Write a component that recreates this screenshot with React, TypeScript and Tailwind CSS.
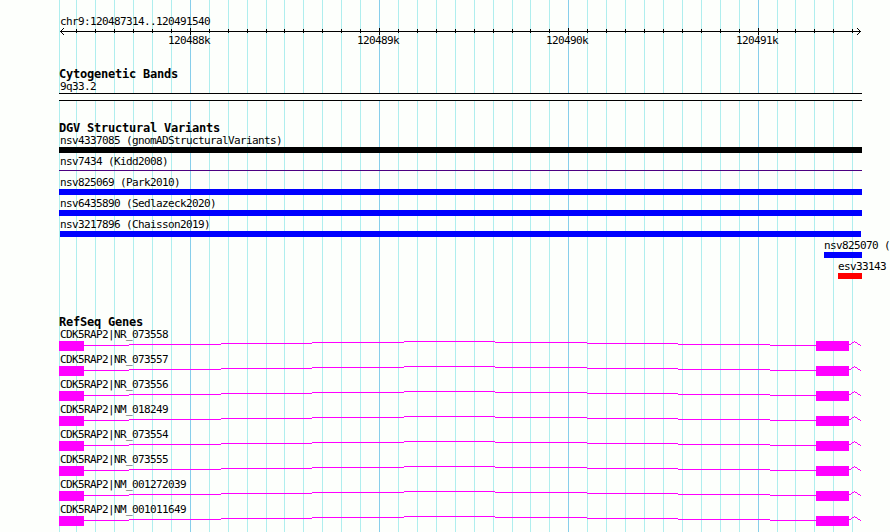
import React from 'react';

interface Variant {
  name: string;
  start: number;
  end: number;
  color: string;
  thin?: boolean;
}

const minorLines = [
  59, 76, 95, 114, 133, 152, 171, 209, 228, 247, 266, 284, 303, 322, 341, 360, 398, 417, 436, 455, 474,
  493, 512, 530, 549, 587, 606, 625, 644, 663, 682, 701, 720, 739, 777, 795, 814, 833, 852,
];

const majorLines = [
  { x: 190, label: '120488k', labelX: 168 },
  { x: 379, label: '120489k', labelX: 357 },
  { x: 568, label: '120490k', labelX: 546 },
  { x: 758, label: '120491k', labelX: 736 },
];

const variants: Variant[] = [
  { name: 'nsv4337085 (gnomADStructuralVariants)', start: 59, end: 862, color: 'bg-black' },
  { name: 'nsv7434 (Kidd2008)', start: 59, end: 862, color: 'bg-[#4b0082]', thin: true },
  { name: 'nsv825069 (Park2010)', start: 59, end: 862, color: 'bg-[#0000ff]' },
  { name: 'nsv6435890 (Sedlazeck2020)', start: 59, end: 862, color: 'bg-[#0000ff]' },
  { name: 'nsv3217896 (Chaisson2019)', start: 60, end: 861, color: 'bg-[#0000ff]' },
  { name: 'nsv825070 (', start: 824, end: 862, color: 'bg-[#0000ff]' },
  { name: 'esv33143', start: 838, end: 862, color: 'bg-[#ff0000]' },
];

const genes = [
  'CDK5RAP2|NR_073558',
  'CDK5RAP2|NR_073557',
  'CDK5RAP2|NR_073556',
  'CDK5RAP2|NM_018249',
  'CDK5RAP2|NR_073554',
  'CDK5RAP2|NR_073555',
  'CDK5RAP2|NM_001272039',
  'CDK5RAP2|NM_001011649',
];

// [x1, x2, y] pieces of the peaked intron connectors
const intron = [
  [84, 129, 4],
  [129, 221, 3],
  [221, 312, 2],
  [312, 404, 1],
  [404, 495, 0],
  [495, 587, 1],
  [587, 678, 2],
  [678, 770, 3],
  [770, 816, 4],
  [849, 851, 3],
  [851, 852, 2],
  [852, 854, 1],
  [854, 855, 0],
  [855, 857, 1],
  [857, 858, 2],
  [858, 860, 3],
  [860, 861, 4],
];

function GridLines() {
  return (
    <svg className="absolute inset-0" width="890" height="532" shapeRendering="crispEdges">
      {minorLines.map((x) => (
        <rect key={x} x={x} y={0} width={1} height={532} fill="#afeeee" />
      ))}
      {majorLines.map(({ x }) => (
        <rect key={x} x={x} y={0} width={1} height={532} fill="#87ceeb" />
      ))}
    </svg>
  );
}

function Ruler() {
  return (
    <svg className="block" width="890" height="19" shapeRendering="crispEdges">
      <rect x={60} y={3} width={801} height={1} />
      {minorLines.slice(1).map((x) => (
        <rect key={x} x={x} y={1} width={1} height={4} />
      ))}
      {majorLines.map(({ x, label, labelX }) => (
        <g key={x}>
          <rect x={x} y={0} width={1} height={7} />
          <text x={labelX} y={16}>
            {label}
          </text>
        </g>
      ))}
      <path d="M61 2h1v1h-1zM62 1h1v1h-1zM63 0h1v1h-1zM61 4h1v1h-1zM62 5h1v1h-1zM63 6h1v1h-1z" />
      <path d="M859 2h1v1h-1zM858 1h1v1h-1zM857 0h1v1h-1zM859 4h1v1h-1zM858 5h1v1h-1zM857 6h1v1h-1z" />
    </svg>
  );
}

function TrackTitle({ children }: { children: React.ReactNode }) {
  return (
    <h2 className="h-3 pl-[59px] text-[12px] leading-[12px] font-bold tracking-[-0.224px]">{children}</h2>
  );
}

function VariantRow({ variant }: { variant: Variant }) {
  const { name, start, end, color, thin } = variant;
  return (
    <div>
      <div className="h-[13px]" style={{ paddingLeft: Math.max(start, 60) }}>
        {name}
      </div>
      <div className="h-1.5" style={{ paddingLeft: start }}>
        <div
          className={`${color} ${thin ? 'relative top-0.5 h-px' : 'h-1.5'}`}
          style={{ width: end - start }}
        ></div>
      </div>
    </div>
  );
}

function GeneRow({ name }: { name: string }) {
  return (
    <div>
      <div className="h-[13px] pl-[60px]">{name}</div>
      <svg className="block" width="890" height="10" fill="#ff00ff" shapeRendering="crispEdges">
        <rect x={59} y={0} width={25} height={10} />
        <rect x={816} y={0} width={33} height={10} />
        {intron.map(([x1, x2, y]) => (
          <rect key={x1} x={x1} y={y} width={x2 - x1} height={1} />
        ))}
      </svg>
    </div>
  );
}

export default function App() {
  return (
    <div className="relative h-[532px] w-[890px] overflow-hidden bg-[#fdfffc] font-['DejaVu_Sans_Mono',monospace] text-[11px] leading-[13px] tracking-[-0.622px] whitespace-nowrap text-black">
      <GridLines />
      <div className="relative flex flex-col pt-[15px]">
        <div className="h-[13px] pl-[60px]">chr9:120487314..120491540</div>
        <Ruler />

        <section className="mt-[21px]">
          <TrackTitle>Cytogenetic Bands</TrackTitle>
          <div className="h-[13px] pl-[60px]">9q33.2</div>
          <div className="ml-[59px] h-2 w-[803px] border-y border-black bg-[#fdfffc]"></div>
        </section>

        <section className="mt-[21px]">
          <TrackTitle>DGV Structural Variants</TrackTitle>
          <div className="flex flex-col gap-0.5">
            {variants.map((variant) => (
              <VariantRow key={variant.name} variant={variant} />
            ))}
          </div>
        </section>

        <section className="mt-[37px]">
          <TrackTitle>RefSeq Genes</TrackTitle>
          <div className="flex flex-col gap-0.5">
            {genes.map((name) => (
              <GeneRow key={name} name={name} />
            ))}
          </div>
        </section>
      </div>
    </div>
  );
}
